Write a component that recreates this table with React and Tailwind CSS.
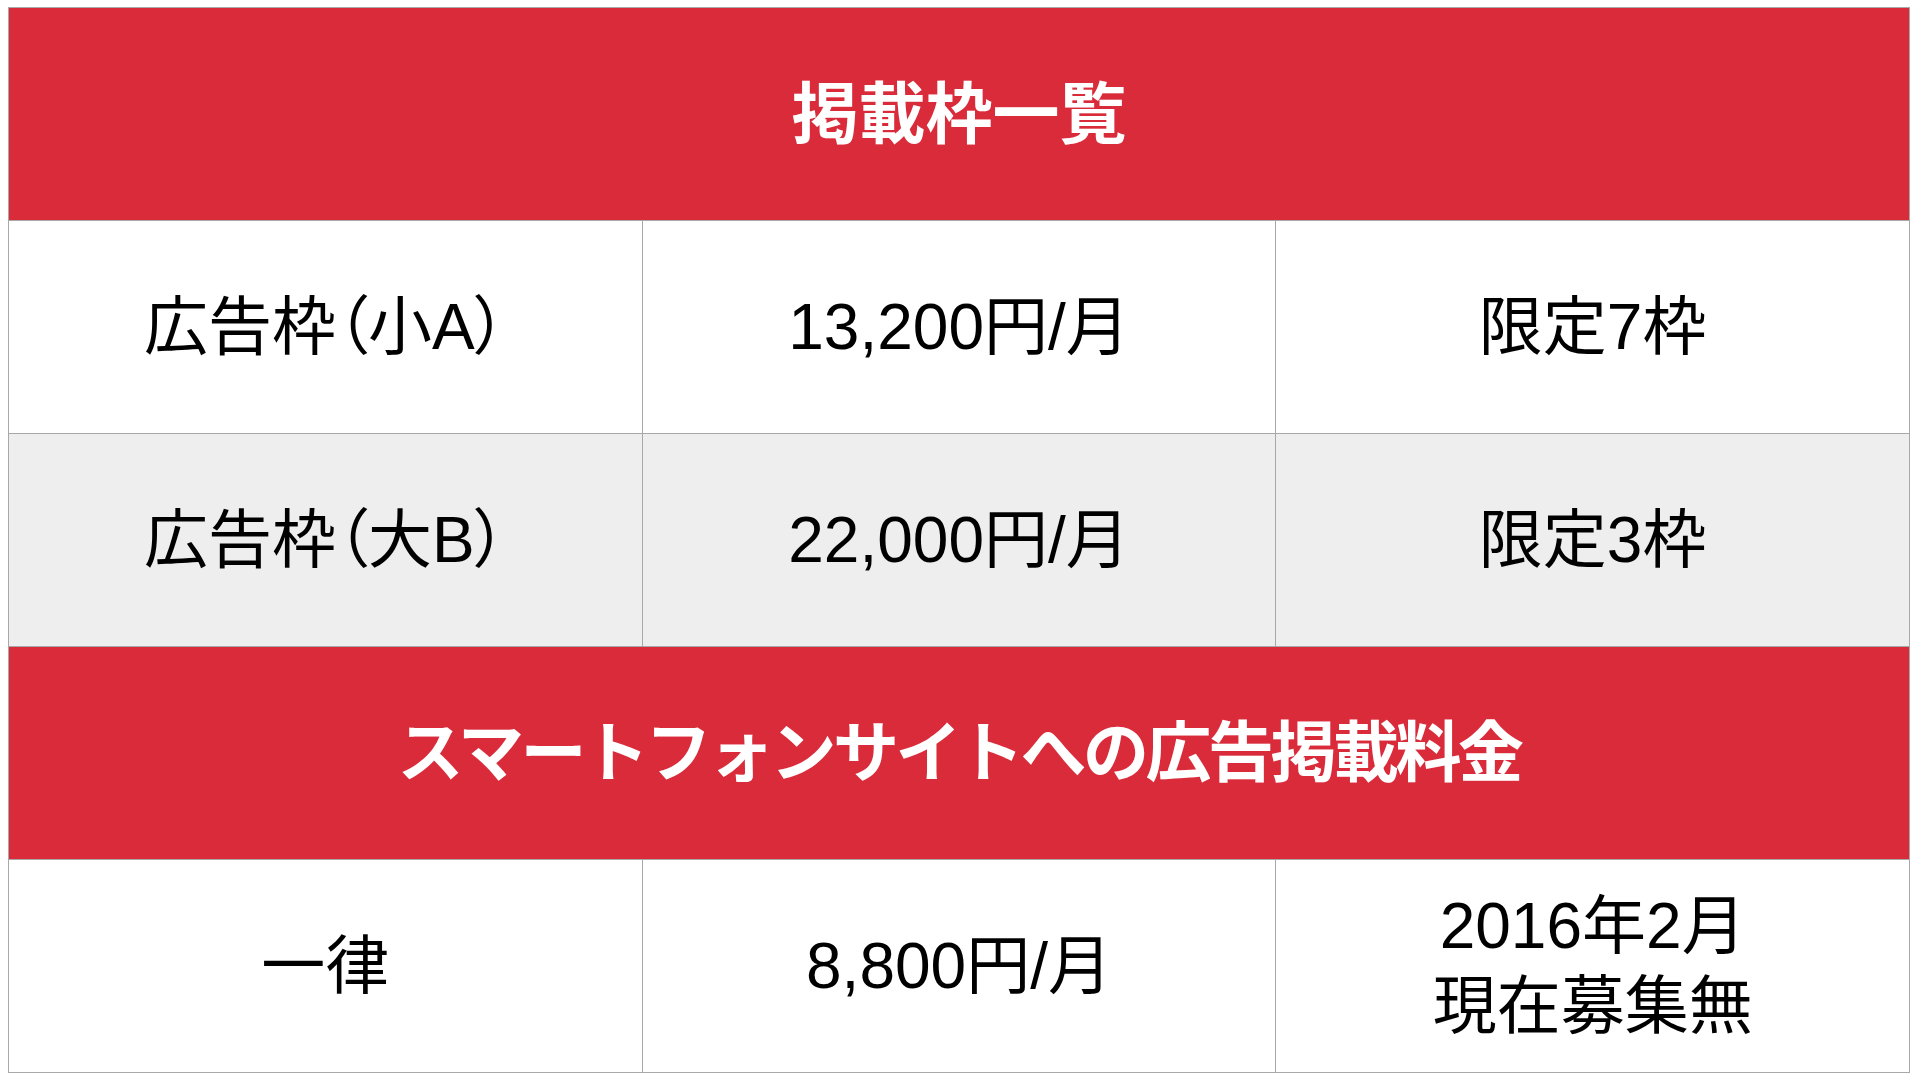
import React from 'react';

// parentheses in the reference are set proportionally
const P = ({ children }) => <span className="[font-feature-settings:'palt']">{children}</span>;

const rows = [
  { type: 'head', text: '掲載枠一覧', cls: 'text-[67px]' },
  { type: 'row', cells: [<>広告枠<P>（</P>小A<P>）</P></>, '13,200円/月', '限定7枠'], bg: 'bg-white' },
  { type: 'row', cells: [<>広告枠<P>（</P>大B<P>）</P></>, '22,000円/月', '限定3枠'], bg: 'bg-[#eeeeee]' },
  { type: 'head', text: 'スマートフォンサイトへの広告掲載料金', cls: 'text-[66px] tracking-[-3.5px]' },
  { type: 'row', cells: ['一律', '8,800円/月', ['2016年2月', '現在募集無']], bg: 'bg-white' },
];

export default function App() {
  return (
    <div
      className="min-h-screen w-full bg-white pl-[8px] pt-[7px]"
      style={{ fontFamily: '"Liberation Sans", "Noto Sans CJK JP", sans-serif' }}
    >
      <table className="w-[1902px] table-fixed border-collapse">
        <tbody>
          {rows.map((r, i) =>
            r.type === 'head' ? (
              <tr key={i} className="h-[213px]">
                <td
                  colSpan={3}
                  className={`border border-[#a8a8a8] bg-[#d92b3a] text-center font-bold leading-none text-white ${r.cls}`}
                >
                  {r.text}
                </td>
              </tr>
            ) : (
              <tr key={i} className={`h-[213px] ${r.bg}`}>
                {r.cells.map((c, j) => (
                  <td
                    key={j}
                    className="border border-[#a8a8a8] text-center text-[64px] leading-[1.25] text-black"
                  >
                    {Array.isArray(c) ? c.map((l) => <div key={l}>{l}</div>) : c}
                  </td>
                ))}
              </tr>
            )
          )}
        </tbody>
      </table>
    </div>
  );
}
